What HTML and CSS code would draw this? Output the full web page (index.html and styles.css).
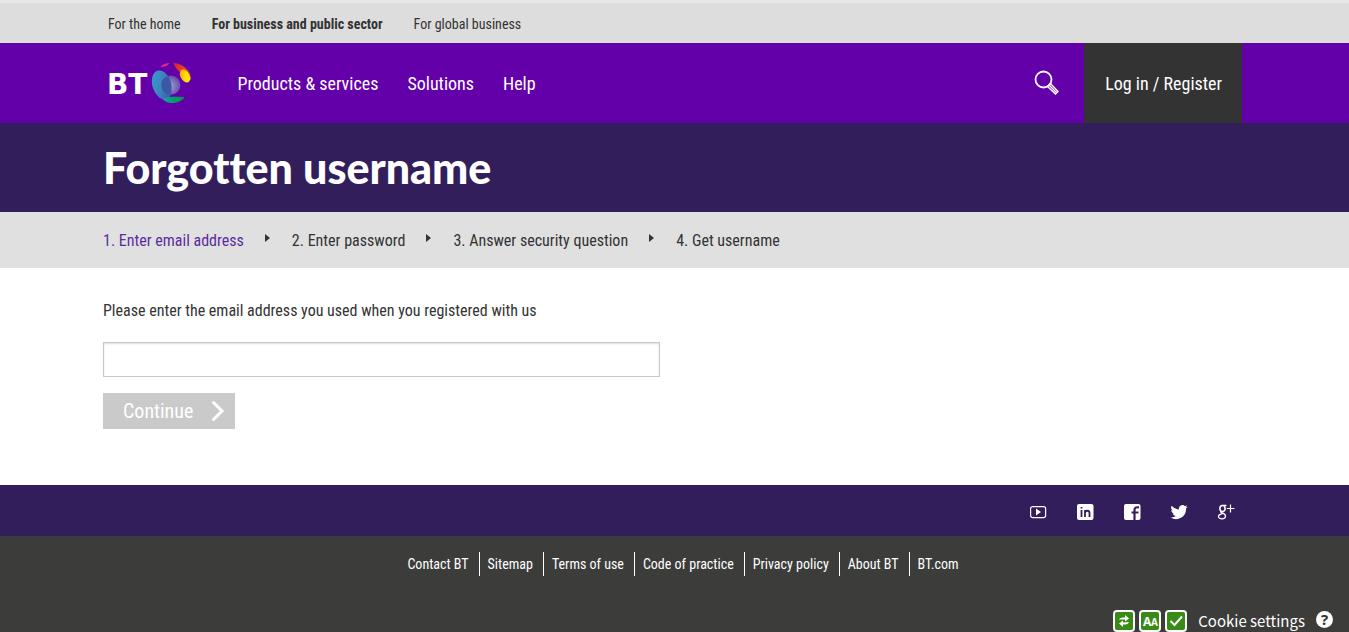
FILE: index.html
```html
<!DOCTYPE html>
<html lang="en">
<head>
<meta charset="utf-8">
<title>Forgotten username</title>
<link rel="stylesheet" href="styles.css">
</head>
<body>
<nav class="segments" aria-label="Customer type">
  <div class="wrap segment-list">
    <a href="#">For the home</a>
    <a href="#" class="current">For business and public sector</a>
    <a href="#">For global business</a>
  </div>
</nav>
<header class="masthead">
  <div class="wrap masthead-row">
    <a href="#" class="logo" aria-label="BT home">
      <span class="logo-name">BT</span>
      <svg class="globe" viewBox="0 0 40 42" aria-hidden="true">
        <defs>
          <linearGradient id="blue" x1="0" y1="0" x2="1" y2="1"><stop offset="0" stop-color="#3a9fd5"/><stop offset=".5" stop-color="#3c83bd"/><stop offset="1" stop-color="#3a459b"/></linearGradient>
          <radialGradient id="violet" cx=".45" cy=".55" r=".6"><stop offset="0" stop-color="#a79bd3"/><stop offset=".6" stop-color="#7a6bb8"/><stop offset="1" stop-color="#6440a8"/></radialGradient>
          <linearGradient id="red" x1="0" y1="0" x2="1" y2="1"><stop offset="0" stop-color="#d8232f"/><stop offset="1" stop-color="#f26a21"/></linearGradient>
          <linearGradient id="yellow" x1="0" y1="0" x2="1" y2="1"><stop offset="0" stop-color="#f7941d"/><stop offset=".6" stop-color="#ffe800"/></linearGradient>
          <linearGradient id="green"><stop offset="0" stop-color="#16a3b8"/><stop offset=".5" stop-color="#00a06b"/><stop offset="1" stop-color="#089247"/></linearGradient>
        </defs>
        <path d="M9 5C11 2 15 1 18 1 16 4 12 5 9 5Z" fill="#ec268f"/>
        <path d="M22 1C28 1 35 5 38 11 39 14 40 16 39 18L32 12C28 10 24 7 22 1Z" fill="url(#red)"/>
        <ellipse cx="33.500" cy="14" rx="4.500" ry="7" transform="rotate(-28 33.500 14)" fill="url(#yellow)"/>
        <ellipse cx="10.500" cy="23" rx="9.500" ry="15" transform="rotate(-18 10.500 23)" fill="url(#blue)"/>
        <circle cx="19.500" cy="23" r="9.500" fill="url(#violet)"/>
        <path d="M10 23C10 16 15 14 17 15 20 20 21 27 19 32.500 13 32 10 29 10 23Z" fill="#3b57a6"/>
        <path d="M11 37C17 34 27 35 33 35 31 39 25 41 20 41 16 41 13 39 11 37Z" fill="url(#green)"/>
      </svg>
    </a>
    <nav class="main-nav" aria-label="Main">
      <a href="#">Products &amp; services</a>
      <a href="#">Solutions</a>
      <a href="#">Help</a>
    </nav>
    <button type="button" class="search" aria-label="Search">
      <svg viewBox="0 0 26 26" fill="none" stroke="currentColor" aria-hidden="true">
        <circle cx="9.500" cy="9.500" r="8" stroke-width="1.800"/>
        <path d="M13.500 16.500 16.500 13.500 24 21.500 21.500 24ZM15 15 22.700 22.700" stroke-width="1.400"/>
      </svg>
    </button>
    <a href="#" class="login">Log in / Register</a>
  </div>
</header>
<div class="title-band"><h1 class="wrap">Forgotten username</h1></div>
<div class="steps-band">
  <ol class="wrap steps">
    <li class="active">1. Enter email address</li>
    <li>2. Enter password</li>
    <li>3. Answer security question</li>
    <li>4. Get username</li>
  </ol>
</div>
<main class="content">
  <form class="wrap">
    <label for="email">Please enter the email address you used when you registered with us</label>
    <input id="email" type="email" class="field">
    <button type="button" class="continue">Continue
      <svg viewBox="0 0 14 22" fill="none" stroke="currentColor" stroke-width="3" stroke-linecap="round" aria-hidden="true"><path d="M2.500 2.500 11 11 2.500 19.500"/></svg>
    </button>
  </form>
</main>
<div class="social-band">
  <div class="wrap social">
    <a href="#" aria-label="YouTube"><svg viewBox="0 0 18 18" aria-hidden="true"><rect x="1.600" y="3.600" width="15" height="11" rx="2" fill="none" stroke="currentColor" stroke-width="1.200"/><path d="M7 5.500 12 9 7 12.500Z" fill="currentColor"/></svg></a>
    <a href="#" aria-label="LinkedIn"><svg viewBox="0 0 18 18" aria-hidden="true"><rect x="1" y="1" width="16.500" height="16" rx="2" fill="currentColor"/><g fill="none" stroke="#321e5b" stroke-width="1.800"><path d="M5.500 7V14M5.500 4V5.600M9 7V14M9 10C9 7 13.500 7 13.500 10V14"/></g></svg></a>
    <a href="#" aria-label="Facebook"><svg viewBox="0 0 18 18" aria-hidden="true"><rect x="1" y="1" width="16.500" height="16" rx="2" fill="currentColor"/><path d="M11.500 17V7C11.500 4.500 13 4 16 4.300M8.500 9.500H15.500" fill="none" stroke="#321e5b" stroke-width="2.200"/></svg></a>
    <a href="#" aria-label="Twitter"><svg viewBox="0 0 24 24" fill="currentColor" aria-hidden="true"><path d="M23.600 4.900c-.9.400-1.800.7-2.700.8 1-.6 1.700-1.500 2.100-2.600-.9.500-1.900.9-3 1.100a4.700 4.700 0 0 0-8 4.300C8 8.300 4.600 6.400 2.300 3.600a4.700 4.700 0 0 0 1.500 6.300c-.8 0-1.500-.2-2.100-.6a4.700 4.700 0 0 0 3.800 4.700c-.7.200-1.400.2-2.100.1a4.700 4.700 0 0 0 4.400 3.300A9.500 9.500 0 0 1 .8 19.300a13.400 13.400 0 0 0 20.600-11.900c.9-.7 1.700-1.500 2.200-2.500z"/></svg></a>
    <a href="#" aria-label="Google Plus"><svg viewBox="0 0 18 18" fill="none" stroke="currentColor" aria-hidden="true"><ellipse cx="5.500" cy="5.500" rx="2.600" ry="3" stroke-width="1.500"/><path d="M9.500 2.300H5.500M4 8.300C2.500 10 8.500 9.800 8.500 13 8.500 16.700 1.500 16.700 1.500 13.500 1.500 11.500 4 11 5.500 10.700" stroke-width="1.300"/><path d="M13.500 1.500V9.500M9.800 5.500H17.500" stroke-width="1.200"/></svg></a>
  </div>
</div>
<footer class="footer">
  <nav class="footer-links" aria-label="Footer">
    <a href="#">Contact BT</a><a href="#">Sitemap</a><a href="#">Terms of use</a><a href="#">Code of practice</a><a href="#">Privacy policy</a><a href="#">About BT</a><a href="#">BT.com</a>
  </nav>
  <div class="cookies">
    <div class="badges">
      <svg viewBox="0 0 22 22" aria-hidden="true"><rect class="badge" x="1" y="1" width="20" height="20" rx="3"/><path d="M6 9.500C7 7.500 9 7.500 12 7.500V5L16 8.500 12 11.500V9.500ZM16 12C15 14.500 13 14.500 10 14.500V17L6 13.500 10 10.500V12.500Z" fill="#fff"/></svg>
      <svg viewBox="0 0 22 22" aria-hidden="true"><rect class="badge" x="1" y="1" width="20" height="20" rx="3"/><text class="badge-text" x="4" y="16" font-size="12">A</text><text class="badge-text" x="12" y="16" font-size="10">A</text></svg>
      <svg viewBox="0 0 22 22" aria-hidden="true"><rect class="badge" x="1" y="1" width="20" height="20" rx="3"/><path d="M5.500 11 9.500 15 17 6.500" fill="none" stroke="#fff" stroke-width="2"/></svg>
    </div>
    <a href="#" class="cookie-link">Cookie settings</a>
    <button type="button" class="help" aria-label="Help with cookies">?</button>
  </div>
</footer>
</body>
</html>
```
FILE: styles.css
```css
* { box-sizing: border-box; }
body {
  margin: 0;
  font-family: "Roboto Condensed", Lato, sans-serif;
  font-size: 16px;
  line-height: 20px;
  color: #333;
  background: #fff;
}
a { color: inherit; text-decoration: none; }
button { font: inherit; border: 0; cursor: pointer; }
svg { display: block; }
.wrap { width: 100%; max-width: 1349px; margin: 0 auto; padding: 0 103px; }

.segments { border-top: 3px solid #e8e8e8; background: #ddd; font-size: 14px; }
.segment-list { display: flex; align-items: center; gap: 31px; height: 40px; padding: 2px 108px 0; }
.current { font-weight: 700; }

.masthead { background: #6400aa; color: #fff; font-size: 18px; }
.masthead-row { display: flex; align-items: center; height: 80px; padding: 0 107px; }
.logo { display: flex; align-items: center; gap: 4px; margin-right: 45px; }
.logo-name { font: 700 28px/28px "DejaVu Sans", sans-serif; padding-top: 4px; }
.globe { width: 41px; height: 42px; }
.main-nav { display: flex; gap: 29px; padding-top: 2px; }
.search { margin-left: auto; margin-right: 24px; padding: 0; background: none; color: #fff; }
.search svg { width: 26px; height: 26px; }
.login { display: flex; align-items: center; justify-content: center; align-self: stretch; padding: 2px 20px 0 21px; background: #333; }

.title-band { background: #321e5b; color: #fff; }
h1 { font-family: Lato, sans-serif; font-size: 43px; line-height: 89px; font-weight: 900; font-variant-ligatures: none; }

.steps-band { background: #e0e0e0; }
.steps { display: flex; align-items: center; height: 56px; padding-top: 2px; list-style: none; }
.steps li { display: flex; align-items: flex-start; }
.steps li + li::before { content: ""; margin: 3px 22px 0 21px; border: solid transparent; border-width: 4px 0 4px 5px; border-left-color: #333; }
.active { color: #5c2d9e; }

.content { padding: 33px 0 56px; }
label { display: block; margin-bottom: 21px; }
.field { display: block; width: 100%; max-width: 557px; height: 35px; border: 1px solid #c8c8c8; padding: 0 8px; font: inherit; box-shadow: inset 0 1px 2px #ddd; }
.continue { display: flex; align-items: center; gap: 18px; height: 36px; margin-top: 16px; padding: 0 10px 0 20px; background: #cacaca; color: #fff; font-size: 20px; }
.continue svg { width: 14px; height: 22px; }

.social-band { background: #321e5b; color: #fff; }
.social { display: flex; align-items: center; justify-content: flex-end; gap: 29px; height: 51px; padding: 2px 114px 0 0; }
.social svg { width: 18px; height: 18px; }

.footer { background: #3c3c3b; color: #fff; padding-top: 16px; font-size: 14px; }
.footer-links { display: flex; justify-content: center; line-height: 24px; padding-left: 17px; }
.footer-links a + a { margin-left: 10px; padding-left: 8px; border-left: 1px solid #fff; }
.cookies { display: flex; justify-content: flex-end; align-items: flex-start; height: 56px; padding: 34px 16px 0; gap: 11px; }
.badges { display: flex; gap: 4px; }
.badges svg { width: 22px; height: 22px; }
.badge { fill: #398a16; stroke: #fff; stroke-width: 2; }
.badge-text { fill: #fff; font-family: "Noto Sans", sans-serif; font-weight: 700; }
.cookie-link { font: 15px/22px "Noto Sans CJK SC", "Noto Sans", sans-serif; }
.help { width: 17px; height: 17px; margin-top: 1px; padding: 0; border-radius: 50%; background: #fff; color: #333; font: 700 15px/17px "Noto Sans", sans-serif; }
```
